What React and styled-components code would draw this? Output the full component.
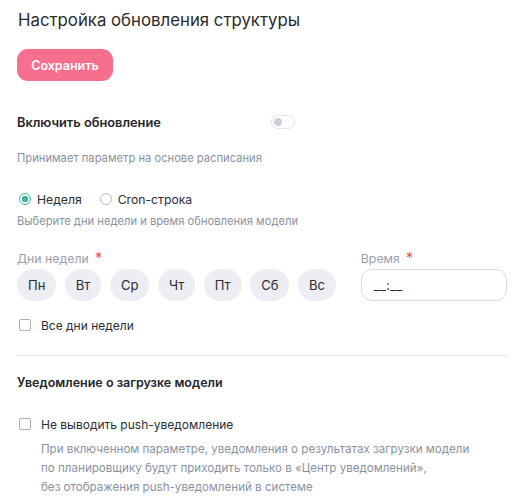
import React from "react";
import styled, { createGlobalStyle } from "styled-components";

const GlobalStyle = createGlobalStyle`
  body {
    margin: 0;
    background: #ffffff;
    font-family: Inter, "Noto Sans", sans-serif;
    color: #2b2d33;
  }
`;

const Page = styled.div`
  padding: 8px 17px 0 17px;
  width: 491px;
`;

const Title = styled.h1`
  margin: 0 0 0 1px;
  font-size: 16.8px;
  line-height: 24px;
  font-weight: 400;
  color: #2b2b2b;
`;

const SaveButton = styled.button`
  margin-top: 17px;
  height: 32px;
  width: 96px;
  border: none;
  border-radius: 11px;
  background: #f76f8d;
  color: #fff;
  font-family: inherit;
  font-size: 12.5px;
  font-weight: 600;
  cursor: pointer;
`;

const ToggleRow = styled.div`
  display: flex;
  align-items: center;
  justify-content: space-between;
  width: 278px;
  margin-top: 31px;
  height: 20px;
`;

const Strong = styled.div`
  font-size: 12.8px;
  font-weight: 600;
  color: #24262b;
`;

const Toggle = styled.span`
  position: relative;
  display: inline-block;
  width: 22px;
  height: 12px;
  border: 1px solid #dfe3ea;
  border-radius: 8px;
  background: #fff;

  &::after {
    content: "";
    position: absolute;
    left: 2px;
    top: 2px;
    width: 8px;
    height: 8px;
    border-radius: 50%;
    background: #c9d0dc;
  }
`;

const Hint = styled.div`
  font-size: 11.2px;
  line-height: 16px;
  color: #8b92a0;
  margin-top: ${(p) => p.$mt || 0}px;
`;

const RadioGroup = styled.div`
  display: flex;
  align-items: center;
  gap: 18px;
  margin-top: 24px;
  margin-left: 2px;
  height: 18px;
`;

const RadioOption = styled.label`
  display: flex;
  align-items: center;
  gap: 6px;
  font-size: 12.2px;
  color: #2b2d33;
`;

const RadioDot = styled.span`
  box-sizing: border-box;
  width: 12px;
  height: 12px;
  border-radius: 50%;
  border: 1px solid ${(p) => (p.$checked ? "#3ab5a6" : "#b7bdc8")};
  background: ${(p) =>
    p.$checked ? "radial-gradient(circle, #3ab5a6 0 3px, #fff 3.5px)" : "#fff"};
`;

const Fields = styled.div`
  display: flex;
  gap: 25px;
  margin-top: 20px;
`;

const Field = styled.div`
  display: flex;
  flex-direction: column;
  gap: 1px;
`;

const Label = styled.div`
  font-size: 12.3px;
  line-height: 18px;
  color: #9aa0ac;

  span {
    color: #f0555e;
    margin-left: 6px;
    font-size: 15px;
  }
`;

const Days = styled.div`
  display: flex;
  gap: 8.5px;
`;

const Day = styled.span`
  display: inline-flex;
  align-items: center;
  justify-content: center;
  height: 32px;
  padding: 0 11px;
  border-radius: 16px;
  background: #eceef4;
  font-size: 13px;
  color: #2b2d33;
`;

const TimeInput = styled.div`
  box-sizing: border-box;
  width: 146px;
  height: 32px;
  border: 1px solid #d8dde5;
  border-radius: 11px;
  padding: 0 12px;
  display: flex;
  align-items: center;
  font-size: 13px;
  color: #2b2d33;
  letter-spacing: 0.3px;
`;

const CheckRow = styled.label`
  display: flex;
  align-items: center;
  gap: 10px;
  margin-left: 2px;
  margin-top: ${(p) => p.$mt}px;
  font-size: 12px;
  color: #2b2d33;
  height: 18px;
`;

const Box = styled.span`
  box-sizing: border-box;
  width: 12px;
  height: 12px;
  border: 1px solid #a9b0bd;
  border-radius: 2px;
  background: #fff;
`;

const Divider = styled.hr`
  margin: 21px 0 0 0;
  border: none;
  border-top: 1px solid #e3e6ec;
`;

const Section = styled(Strong)`
  font-size: 12.5px;
  margin-top: 18px;
  line-height: 18px;
`;

const Note = styled.div`
  margin: 7px 0 0 24px;
  font-size: 11.6px;
  line-height: 19px;
  color: #8b92a0;
`;

const days = ["Пн", "Вт", "Ср", "Чт", "Пт", "Сб", "Вс"];

const App = () => (
  <>
    <GlobalStyle />
    <Page>
      <Title>Настройка обновления структуры</Title>
      <SaveButton>Сохранить</SaveButton>

      <ToggleRow>
        <Strong>Включить обновление</Strong>
        <Toggle />
      </ToggleRow>
      <Hint $mt={18}>Принимает параметр на основе расписания</Hint>

      <RadioGroup>
        <RadioOption>
          <RadioDot $checked />
          Неделя
        </RadioOption>
        <RadioOption>
          <RadioDot />
          Cron-строка
        </RadioOption>
      </RadioGroup>
      <Hint $mt={5}>Выберите дни недели и время обновления модели</Hint>

      <Fields>
        <Field>
          <Label>
            Дни недели<span>*</span>
          </Label>
          <Days>
            {days.map((d) => (
              <Day key={d}>{d}</Day>
            ))}
          </Days>
        </Field>
        <Field>
          <Label>
            Время<span>*</span>
          </Label>
          <TimeInput>__:__</TimeInput>
        </Field>
      </Fields>

      <CheckRow $mt={15}>
        <Box />
        Все дни недели
      </CheckRow>

      <Divider />

      <Section>Уведомление о загрузке модели</Section>

      <CheckRow $mt={23}>
        <Box />
        Не выводить push-уведомление
      </CheckRow>
      <Note>
        При включенном параметре, уведомления о результатах загрузки модели
        <br />
        по планировщику будут приходить только в «Центр уведомлений»,
        <br />
        без отображения push-уведомлений в системе
      </Note>
    </Page>
  </>
);

export default App;
